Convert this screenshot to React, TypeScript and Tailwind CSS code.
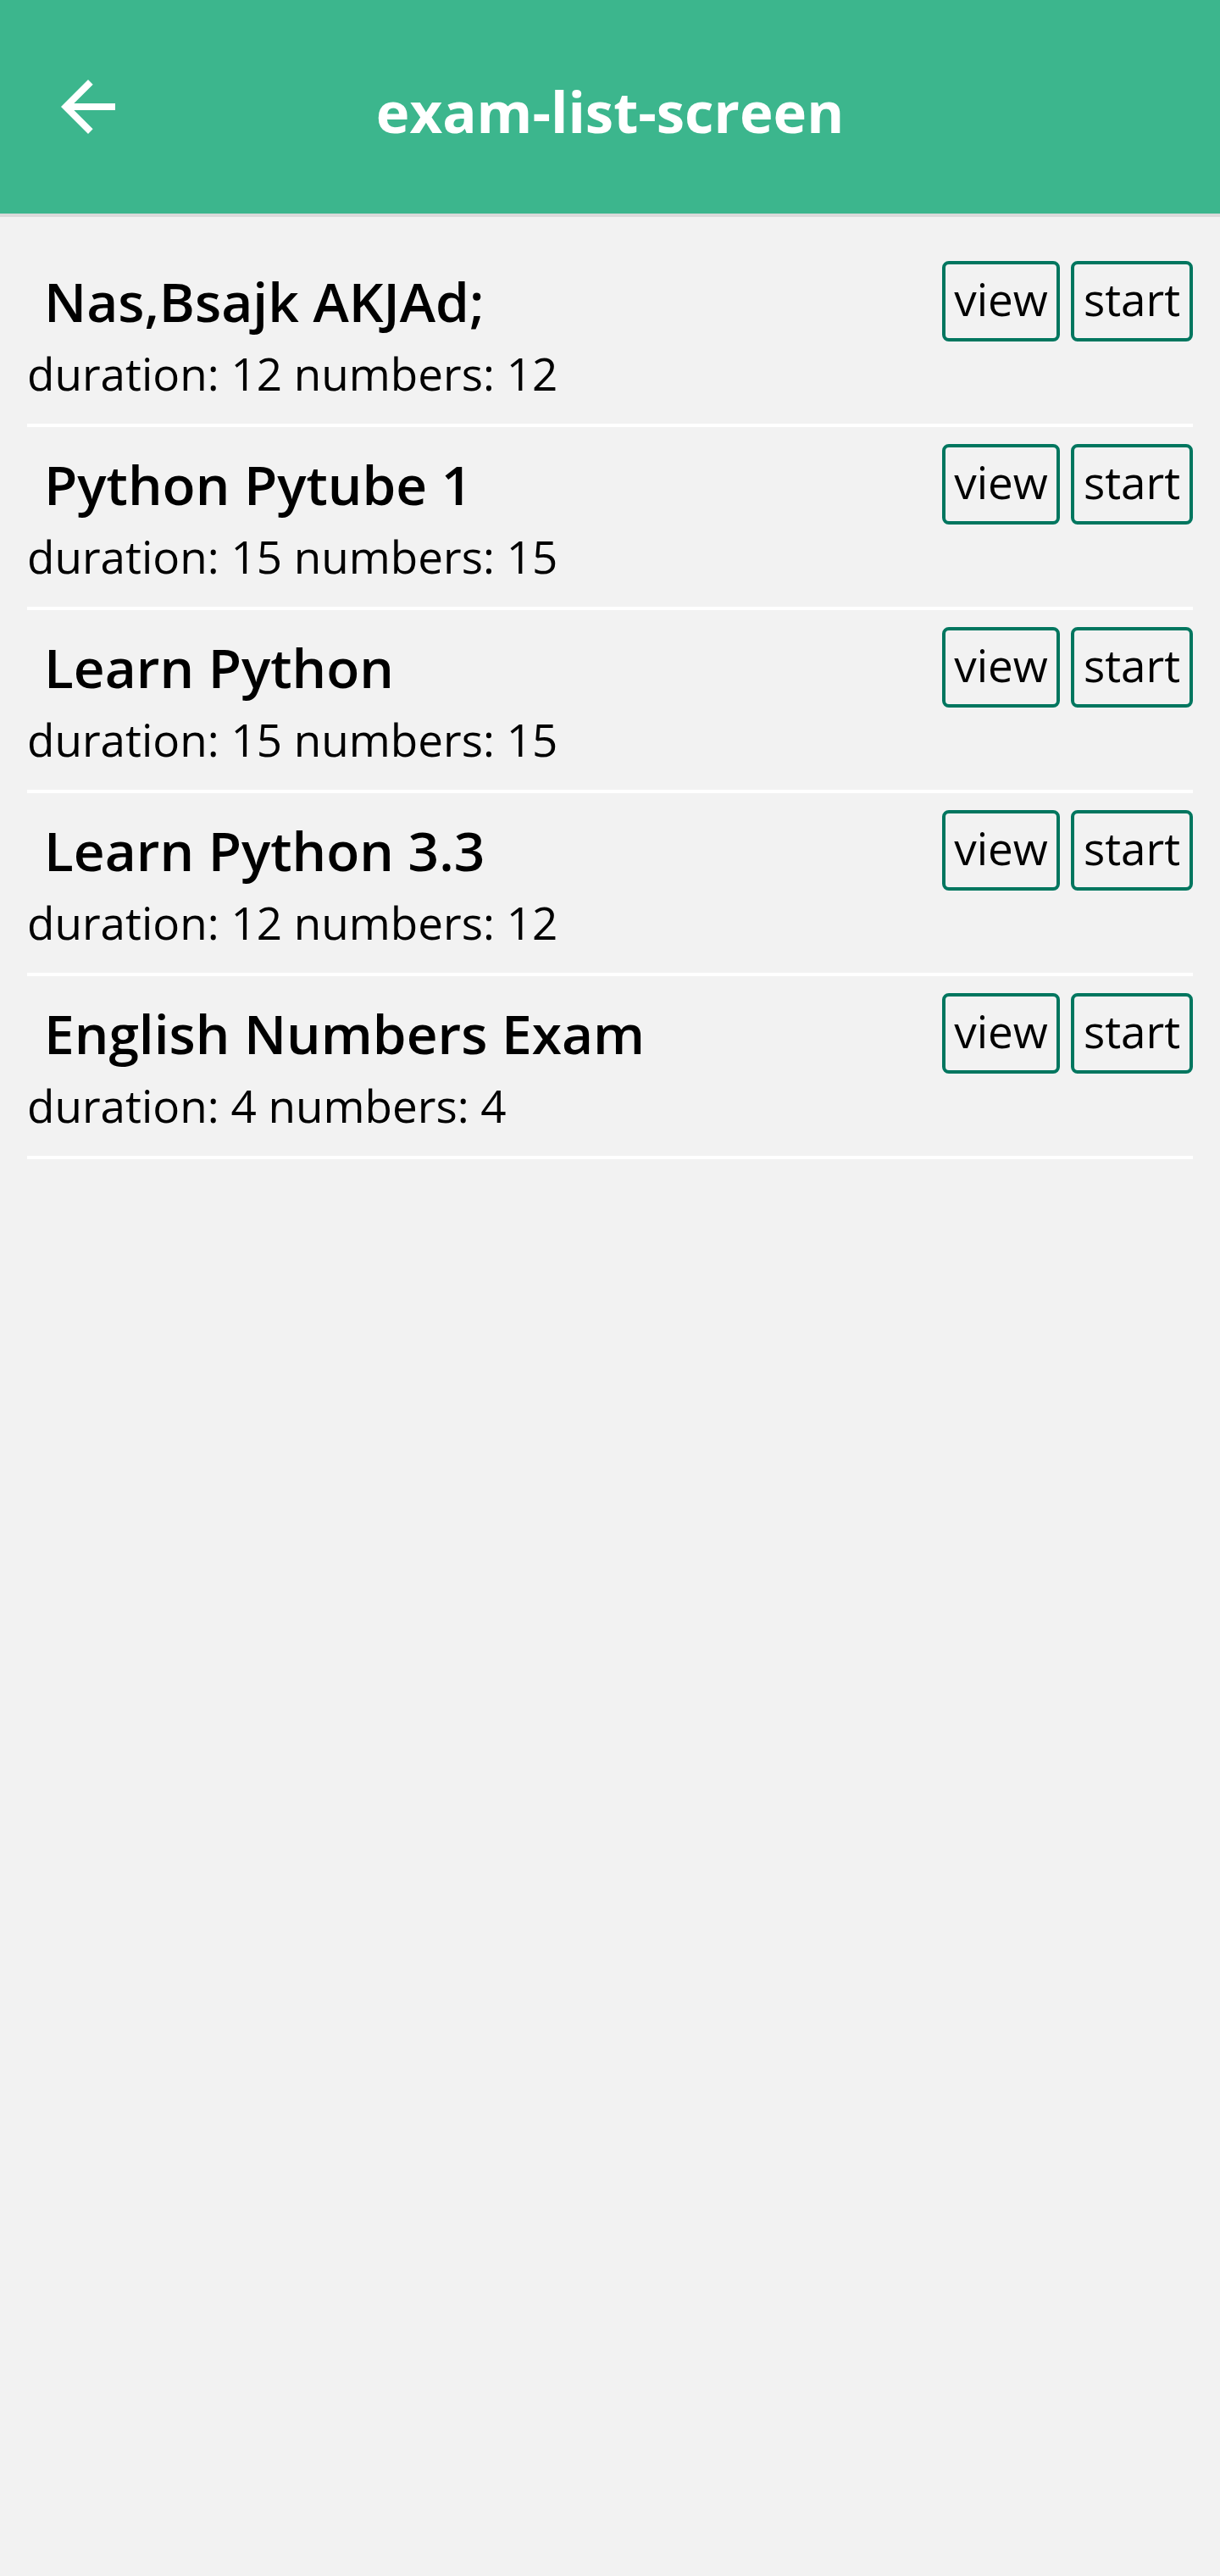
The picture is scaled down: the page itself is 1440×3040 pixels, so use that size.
import React from 'react';

const exams = [
  { title: 'Nas,Bsajk AKJAd;', duration: 12, numbers: 12 },
  { title: 'Python Pytube 1', duration: 15, numbers: 15 },
  { title: 'Learn Python', duration: 15, numbers: 15 },
  { title: 'Learn Python 3.3', duration: 12, numbers: 12 },
  { title: 'English Numbers Exam', duration: 4, numbers: 4 },
];

const BackArrow = () => (
  <svg viewBox="0 0 24 24" className="w-[96px] h-[96px]" fill="#ffffff">
    <path d="M20 11H7.83l5.59-5.59L12 4l-8 8 8 8 1.41-1.41L7.83 13H20v-2z" />
  </svg>
);

const App = () => {
  return (
    <div className="min-h-[3040px] bg-[#f2f2f2] font-['Open_Sans',sans-serif] text-black">
      <header className="h-[256px] bg-[#3cb68d] border-b-4 border-[#dadada] flex items-center">
        <div className="w-[152px] pl-[56px] flex items-center">
          <BackArrow />
        </div>
        <h1 className="flex-1 text-center text-[67px] font-bold text-white pt-[10px]">
          exam-list-screen
        </h1>
        <div className="w-[152px]" />
      </header>

      <div className="px-[32px] pt-[32px]">
        {exams.map((exam, index) => (
          <div key={index} className="border-b-4 border-white pt-[20px] pb-[21px]">
            <div className="flex items-center justify-between h-[95px]">
              <h2 className="pl-[20px] text-[64px] font-semibold leading-none">{exam.title}</h2>
              <div className="flex gap-[13px]">
                <button className="w-[139px] h-[95px] border-4 border-[#00765f] rounded-[8px] text-[53px] leading-none pb-[6px]">
                  view
                </button>
                <button className="w-[144px] h-[95px] border-4 border-[#00765f] rounded-[8px] text-[53px] leading-none pb-[6px]">
                  start
                </button>
              </div>
            </div>
            <p className="text-[53px] leading-[76px]">
              duration: {exam.duration} numbers: {exam.numbers}
            </p>
          </div>
        ))}
      </div>
    </div>
  );
};

export default App;
